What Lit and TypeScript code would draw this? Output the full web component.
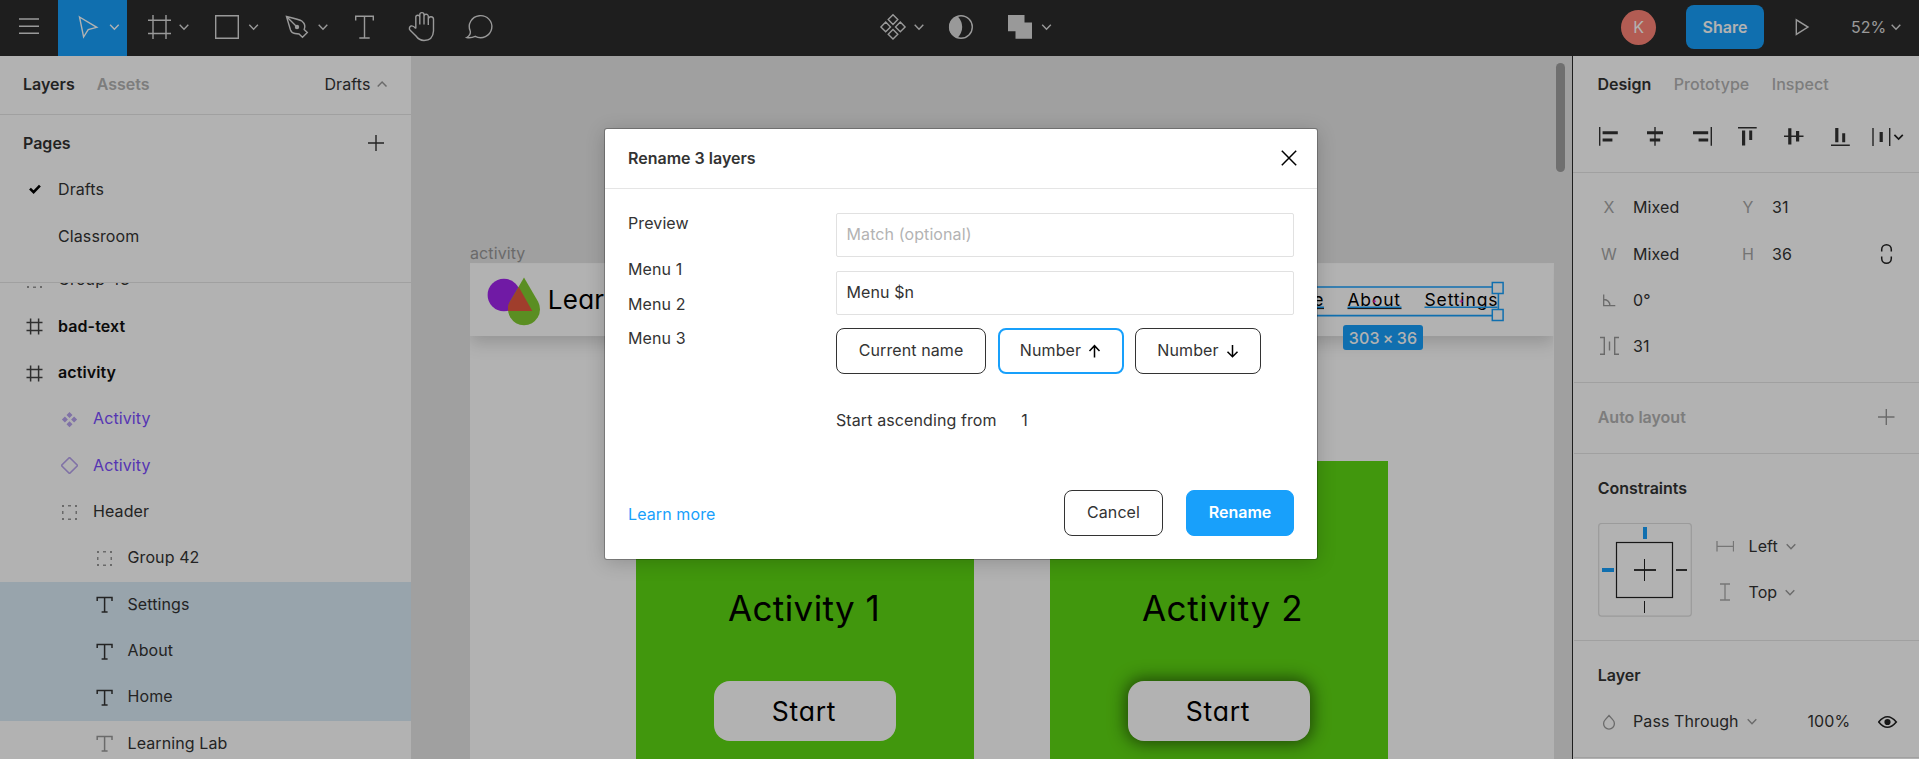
import { LitElement, html, css, svg, nothing, TemplateResult } from "lit";
import { customElement } from "lit/decorators.js";
import { classMap } from "lit/directives/class-map.js";

// Crops a region out of the window-sized drawing grid used by every glyph.
const glyph = (x: number, y: number, w: number, h: number, body: unknown) =>
  html`<svg class="glyph" width=${w} height=${h} viewBox="${x} ${y} ${w} ${h}">${body}</svg>`;

const chevron = (x: number, y: number) =>
  svg`<path d="M${x - 4.3} ${y - 2.2}l4.3 4.4l4.3 -4.4" fill="none" stroke="currentColor" stroke-width="1.4"/>`;

const base = css`
  * { box-sizing: border-box; }
  .glyph { display: block; flex: none; }
`;

@customElement("tool-bar")
class ToolBar extends LitElement {
  static styles = [base, css`
    :host { display: flex; height: 56px; background: #2c2c2c; color: #dcdcdc; font-weight: 400; letter-spacing: 0; }
    .group { display: flex; height: 56px; }
    .center { margin-left: 356px; }
    .active { background: #18a0fb; color: #fff; }
    .right { display: flex; align-items: center; height: 54px; margin-left: auto; }
    .avatar { width: 35px; height: 35px; border-radius: 50%; background: #ff8577; color: #fff; display: flex; align-items: center; justify-content: center; margin-right: 30px; }
    .share { width: 78px; height: 44px; border-radius: 8px; background: #18a0fb; color: #fff; font-weight: 600; display: flex; align-items: center; justify-content: center; padding-bottom: 1px; margin-right: 16px; }
    .zoom { margin-left: 26px; width: 34px; padding-bottom: 1px; }
  `];
  render() {
    const s = (d: string) => svg`<path d=${d} fill="none" stroke="currentColor" stroke-width="1.4"/>`;
    return html`
      <div class="group">
        ${glyph(0, 0, 58, 56, s("M19 19h20M19 26.3h20M19 33.3h20"))}
        <div class="active">${glyph(58, 0, 69, 56, svg`${s("M79.5 17l17.3 10.3l-8.6 2.4l-4.6 7.3z")}${chevron(114.4, 27)}`)}</div>
        ${glyph(127, 0, 68, 56, svg`${s("M148 20.3h23M148 33.5h23M153 15v24M166 15v24")}${chevron(184, 27)}`)}
        ${glyph(195, 0, 72, 56, svg`${s("M215.7 15.7h22.6v22.6h-22.6z")}${chevron(253.6, 27)}`)}
        ${glyph(267, 0, 71, 56, svg`${s("M286.5 16.5L290.5 30Q291.5 33 295 33.5L299 34L302.5 37.3L307.3 32.5L304.2 29.5Q306.2 24.5 301.8 21Q300 19.8 286.5 16.5zM286.5 16.5L296 26")}<circle cx="297" cy="27" r="2.2" fill="currentColor"/>${chevron(323, 27)}`)}
        ${glyph(338, 0, 53, 56, s("M355.7 20.5v-4.3h17.6v4.3M364.5 16.2v21.8M359.3 38h10.4"))}
        ${glyph(391, 0, 58, 56, s("M415.8 28.5V17.2a2 2 0 0 1 4 0M419.8 24.5V14.7a2 2 0 0 1 4.2 0V24.5M424 16.4a2.1 2.1 0 0 1 4.3 0V25M428.3 19.2a2.4 2.4 0 0 1 5.2 .2V31Q433 40.3 424 40.5Q419 40.3 416 36L410.2 30.2A2.5 2.5 0 0 1 411 26Q413 25.3 415.8 28.5"))}
        ${glyph(449, 0, 61, 56, s("M466.8 37.5Q471 35 470.3 31.2A11.3 11 0 1 1 475.2 36.3Q471 38.3 466.8 37.5z"))}
      </div>
      <div class="group center">
        ${glyph(866, 0, 74, 56, svg`${s("M893 14.8l4.8 4.8l-4.8 4.8l-4.8 -4.8zM893 29.4l4.8 4.8l-4.8 4.8l-4.8 -4.8zM885.7 22.1l4.8 4.8l-4.8 4.8l-4.8 -4.8zM900.3 22.1l4.8 4.8l-4.8 4.8l-4.8 -4.8z")}${chevron(919, 27)}`)}
        ${glyph(940, 0, 52, 56, svg`<circle cx="961" cy="27" r="11.3" fill="none" stroke="currentColor" stroke-width="1.4"/><path d="M957.6 16a11.3 11.3 0 0 0 0 22q9.2 -11 0 -22z" fill="currentColor"/>`)}
        ${glyph(992, 0, 74, 56, svg`<path d="M1008 15h16.5v7.5h7.5v16.3h-16.5v-7.6h-7.5z" fill="currentColor"/>${chevron(1046.5, 27)}`)}
      </div>
      <div class="right">
        <div class="avatar">K</div>
        <div class="share">Share</div>
        ${glyph(1780, 0, 45, 54, s("M1796.3 19.8v14.6l11.7 -7.3z"))}
        <div class="zoom">52%</div>
        ${glyph(1885, 0, 34, 54, chevron(1896, 27))}
      </div>`;
  }
}

type Layer = { name: string; icon: string; depth: number; bold?: boolean; tone?: string; selected?: boolean };

@customElement("layers-panel")
class LayersPanel extends LitElement {
  static styles = [base, css`
    :host { display: flex; flex-direction: column; width: 412px; background: #fff; border-right: 1px solid #e5e5e5; overflow: hidden; }
    .tabs { display: flex; height: 59px; padding: 0 23px 2px; align-items: center; border-bottom: 1px solid #e5e5e5; font-weight: 600; letter-spacing: 0; flex: none; }
    .tabs .off { color: #b3b3b3; margin-left: 22px; }
    .tabs .file { margin-left: auto; font-weight: 370; letter-spacing: .1px; margin-right: 5.5px; }
    .faint { color: #999; }
    .pages { height: 168px; padding-top: 5px; border-bottom: 1px solid #e5e5e5; flex: none; }
    .row { display: flex; align-items: center; height: 46.33px; }
    .pages .title { padding: 0 26px 0 23px; justify-content: space-between; font-weight: 600; letter-spacing: 0; }
    .page .glyph { margin-left: 23px; margin-right: 11px; }
    .list { flex: 1; overflow: hidden; min-height: 0; }
    .scroll { margin-top: -25.6px; }
    .layer span { padding-bottom: 2.4px; }
    .layer .glyph { margin-right: 15px; color: #999; }
    .d0 { padding-left: 26px; }
    .d1 { padding-left: 61px; }
    .d2 { padding-left: 95.5px; }
    .bold { font-weight: 600; color: #111; }
    .bold .glyph { color: #444; }
    .comp { color: #7b4dff; }
    .comp .glyph { color: #b8a4ee; }
    .sel { background: #daebf7; }
    .sel .glyph { color: #333; }
  `];
  layers: Layer[] = [
    { name: "Group 43", icon: "group", depth: 0 },
    { name: "bad-text", icon: "frame", depth: 0, bold: true },
    { name: "activity", icon: "frame", depth: 0, bold: true },
    { name: "Activity", icon: "component", depth: 1, tone: "comp" },
    { name: "Activity", icon: "instance", depth: 1, tone: "comp" },
    { name: "Header", icon: "group", depth: 1 },
    { name: "Group 42", icon: "group", depth: 2 },
    { name: "Settings", icon: "text", depth: 2, selected: true },
    { name: "About", icon: "text", depth: 2, selected: true },
    { name: "Home", icon: "text", depth: 2, selected: true },
    { name: "Learning Lab", icon: "text", depth: 2 },
  ];
  icons: Record<string, unknown> = {
    group: svg`<path d="M1 1h2v2h-2zM7 1h3v1.5h-3zM14 1h2v2h-2zM1 7h1.5v3h-1.5zM14.5 7h1.5v3h-1.5zM1 14h2v2h-2zM7 14.5h3v1.5h-3zM14 14h2v2h-2z" fill="currentColor"/>`,
    frame: svg`<path d="M.5 4.5h16M.5 12.5h16M4.6 .5v16M12.6 .5v16" fill="none" stroke="currentColor" stroke-width="1.5"/>`,
    component: svg`<path d="M8.5 1l3 3l-3 3l-3 -3zM8.5 10.2l3 3l-3 3l-3 -3zM3.9 5.6l3 3l-3 3l-3 -3zM13.1 5.6l3 3l-3 3l-3 -3z" fill="currentColor"/>`,
    instance: svg`<path d="M8.5 .4l8.1 8.1l-8.1 8.1l-8.1 -8.1z" fill="none" stroke="currentColor" stroke-width="1.5"/>`,
    text: svg`<path d="M1.2 5v-3.4h14.8v3.4M8.6 1.6v14.4M5.6 16h6" fill="none" stroke="currentColor" stroke-width="1.5"/>`,
  };
  render() {
    return html`
      <div class="tabs"><span>Layers</span><span class="off">Assets</span><span class="file">Drafts</span>
        <span class="faint">${glyph(376, 76, 12, 16, svg`<path d="M377.7 86.6l4.4 -4.5l4.4 4.5" fill="none" stroke="currentColor" stroke-width="1.5"/>`)}</span></div>
      <div class="pages">
        <div class="row title"><span>Pages</span>${glyph(367, 135, 18, 18, svg`<path d="M368 144h16M376 136v16" stroke="#333" stroke-width="1.4"/>`)}</div>
        <div class="row page">${glyph(23, 180, 24, 20, svg`<path d="M30 189.6l3.6 3.6l6.3 -6.6" fill="none" stroke="#000" stroke-width="2.6"/>`)}<span>Drafts</span></div>
        <div class="row page">${glyph(23, 226, 24, 20, nothing)}<span>Classroom</span></div>
      </div>
      <div class="list"><div class="scroll">
        ${this.layers.map((l) => html`<div class=${classMap({ row: true, layer: true, ["d" + l.depth]: true, bold: !!l.bold, comp: l.tone === "comp", sel: !!l.selected })}>
          ${glyph(0, 0, 17, 17, this.icons[l.icon])}<span>${l.name}</span></div>`)}
      </div></div>`;
  }
}

@customElement("design-panel")
class DesignPanel extends LitElement {
  static styles = [base, css`
    :host { display: flex; flex-direction: column; width: 347px; background: #fff; border-left: 1px solid #2c2c2c; overflow: hidden; }
    .tabs { display: flex; align-items: center; height: 57px; padding: 0 0 1px 24.5px; gap: 22.5px; font-weight: 600; letter-spacing: 0; flex: none; }
    .off { color: #b3b3b3; font-weight: 500; letter-spacing: .05px; }
    .align { height: 60px; border-bottom: 1px solid #e5e5e5; flex: none; }
    .section { padding: 11.2px 0; border-bottom: 1px solid #e5e5e5; margin-left: 1px; flex: none; }
    .row { display: flex; align-items: center; height: 46.33px; }
    .title { font-weight: 600; letter-spacing: 0; padding-left: 23.7px; }
    .spread { justify-content: space-between; padding-right: 24px; }
    .muted { color: #b3b3b3; }
    .lab { width: 35px; margin-left: 24px; display: flex; justify-content: center; padding-right: 13px; color: #a6a6a6; flex: none; }
    .val { width: 80px; flex: none; }
    .props { height: 210px; }
    .auto { height: 71px; }
    .cons { height: 187px; }
    .layer { height: 117px; }
    .body { display: flex; padding: 11px 0 0 24px; }
    .menus { margin-left: 24px; }
    .menus .row { gap: 14.5px; }
    .g9 { color: #999; }
    .drop { display: flex; align-items: center; gap: 5px; }
    .pass { width: 174.5px; }
    .pct { width: 70px; }
    .pass, .pct { padding-bottom: 1px; }
  `];
  render() {
    const caret = html`<span class="g9">${glyph(0, 0, 16, 16, chevron(8, 8.5))}</span>`;
    const box = (d: string) => svg`<path d=${d} fill="#333"/>`;
    return html`
      <div class="tabs"><span>Design</span><span class="off">Prototype</span><span class="off">Inspect</span></div>
      <div class="align">${glyph(1573, 113, 346, 59, svg`
        ${box("M1599 127h1.4v18.7h-1.4zM1602.6 131.3h15.2v3h-15.2zM1602.6 138.6h9.8v3h-9.8z")}
        ${box("M1654.3 127h1.4v18.7h-1.4zM1647 131.3h16v3h-16zM1649.8 138.6h10.4v3h-10.4z")}
        ${box("M1710.6 127h1.4v18.7h-1.4zM1693 131.3h15.2v3h-15.2zM1698.6 138.6h9.6v3h-9.6z")}
        ${box("M1738 127h18.7v1.4h-18.7zM1742 130.6h3.2v15h-3.2zM1749.2 130.6h3v9.4h-3z")}
        ${box("M1784 135.6h19.5v1.4h-19.5zM1788.2 128.2h3.2v16.4h-3.2zM1796 131h3.2v10.6h-3.2z")}
        ${box("M1831 144.6h18.8v1.4h-18.8zM1835.2 128h3.2v14.2h-3.2zM1842.2 133.2h3v9h-3z")}
        ${box("M1872.3 128h1.4v18h-1.4zM1879.6 132h3.2v10h-3.2zM1889 128h1.4v18h-1.4z")}
        <path d="M1894.4 134.8l4.2 4.2l4.2 -4.2" fill="none" stroke="#222" stroke-width="1.7"/>`)}</div>
      <div class="section props">
        <div class="row"><span class="lab">X</span><span class="val">Mixed</span><span class="lab">Y</span><span class="val">31</span></div>
        <div class="row"><span class="lab">W</span><span class="val">Mixed</span><span class="lab">H</span><span class="val">36</span>
          ${glyph(1852, 242, 42, 24, svg`<path d="M1881.7 251.5v-2a4.8 4.8 0 0 1 9.6 0v2M1881.7 256.5v2a4.8 4.8 0 0 0 9.6 0v-2" fill="none" stroke="#222" stroke-width="1.5"/>`)}</div>
        <div class="row"><span class="lab">${glyph(1599, 290, 20, 20, svg`<path d="M1603.7 294.5v11.2h11.6M1603.7 299.5q6 .5 6.2 6" fill="none" stroke="#999" stroke-width="1.3"/>`)}</span><span class="val">0°</span></div>
        <div class="row"><span class="lab">${glyph(1599, 337, 20, 20, svg`<path d="M1600 338.5h4.3v16.8h-4.3M1619 338.5h-4.3v16.8h4.3M1609.5 342.5v9" fill="none" stroke="#999" stroke-width="1.4"/>`)}</span><span class="val">31</span></div>
      </div>
      <div class="section auto"><div class="row title spread muted"><span>Auto layout</span>
        ${glyph(1877, 408, 18, 18, svg`<path d="M1878 417h16.5M1886.3 409v16" stroke="#999" stroke-width="1.4"/>`)}</div></div>
      <div class="section cons">
        <div class="row title">Constraints</div>
        <div class="body">
          ${glyph(1598, 523, 94, 94, svg`
            <rect x="1598.7" y="523.5" width="92.6" height="92.7" rx="3" fill="none" stroke="#dedede" stroke-width="1.2"/>
            <rect x="1616.5" y="542.5" width="56" height="55" fill="none" stroke="#222" stroke-width="1.2"/>
            <path d="M1634 570h22" stroke="#222" stroke-width="1.8"/><path d="M1644.5 559v22" stroke="#222"/>
            <path d="M1676 570h11" stroke="#222" stroke-width="1.8"/><path d="M1644.5 601v12" stroke="#222"/>
            <path d="M1643 527h4v12h-4zM1602 568h12v4h-12z" fill="#18a0fb"/>`)}
          <div class="menus">
            <div class="row">${glyph(1716, 538, 18, 18, svg`<path d="M1717 542v10.5M1733.5 542v10.5M1717 547.3h16.5" fill="none" stroke="#aaa" stroke-width="1.3"/>`)}<span class="drop">Left ${caret}</span></div>
            <div class="row">${glyph(1716, 584, 18, 18, svg`<path d="M1720 585h10M1720 601h10M1725 585v16" fill="none" stroke="#aaa" stroke-width="1.3"/>`)}<span class="drop">Top ${caret}</span></div>
          </div>
        </div>
      </div>
      <div class="section layer">
        <div class="row title">Layer</div>
        <div class="row"><span class="lab">${glyph(1600, 713, 18, 18, svg`<path d="M1609 715.5l3.9 4.4a5.4 5.4 0 1 1 -7.8 0z" fill="none" stroke="#999" stroke-width="1.3"/>`)}</span>
          <span class="drop pass">Pass Through ${caret}</span><span class="pct">100%</span>
          ${glyph(1878, 712, 20, 18, svg`<path d="M1878.7 721q8.6 -10.5 17.6 0q-9 10.5 -17.6 0z" fill="none" stroke="#222" stroke-width="1.6"/><circle cx="1887.5" cy="721" r="3.1" fill="#222"/>`)}</div>
      </div>`;
  }
}

@customElement("design-canvas")
class DesignCanvas extends LitElement {
  static styles = [base, css`
    :host { display: block; position: relative; flex: 1; background: #e5e5e5; overflow: hidden; }
    .label { position: absolute; left: 58px; top: 187px; color: #999; line-height: 20px; }
    .board { position: absolute; left: 58px; top: 207.4px; width: 1083.5px; height: 520px; background: #fff; color: #000; font-weight: 400; font-feature-settings: "cv11", "ss01"; }
    .head { position: absolute; inset: 0 0 auto 0; height: 72.5px; background: #fff; box-shadow: 0 7px 16px rgba(0,0,0,.17); clip-path: inset(0 0 -40px 0); }
    .logo { position: absolute; left: 16px; top: 12px; }
    .brand { position: absolute; left: 77.7px; top: 20.5px; font-size: 26px; line-height: 32px; white-space: nowrap; letter-spacing: .3px; }
    .nav { position: absolute; top: 26px; font-size: 17.5px; line-height: 22px; white-space: nowrap; }
    .home { right: 230px; }
    .about { left: 877.5px; letter-spacing: .8px; }
    .settings { left: 954.5px; letter-spacing: .85px; }
    .card { position: absolute; top: 197.2px; width: 338.6px; height: 340px; background: #5ed813; display: flex; flex-direction: column; align-items: center; }
    .one { left: 165.7px; }
    .two { left: 579.7px; }
    .name { margin-top: 125px; font-size: 35px; line-height: 44px; letter-spacing: .4px; padding-right: 2px; }
    .two .name { padding: 0 0 0 7px; letter-spacing: .6px; }
    .start { margin-top: 51px; width: 181.5px; height: 60.5px; border-radius: 16px; background: #fff; display: flex; align-items: center; justify-content: center; font-size: 26.5px; letter-spacing: .8px; padding: 1px 2px 0 0; }
    .two .start { box-shadow: 0 0 16px 3px rgba(0,0,0,.5); }
    .marks { position: absolute; left: 888px; top: 222px; }
    .size { position: absolute; left: 931px; top: 269px; width: 80px; height: 25px; border-radius: 3px; background: #18a0fb; color: #fff; font-weight: 500; letter-spacing: .2px; word-spacing: -1.4px; display: flex; align-items: center; justify-content: center; }
    .thumb { position: absolute; right: 7px; top: 7px; width: 9px; height: 109px; border-radius: 5px; background: #a0a0a0; }
  `];
  render() {
    return html`
      <div class="label">activity</div>
      <div class="board">
        <div class="card one"><div class="name">Activity 1</div><div class="start">Start</div></div>
        <div class="card two"><div class="name">Activity 2</div><div class="start">Start</div></div>
        <div class="head">
          <div class="logo">${glyph(486, 275.5, 60, 52, svg`
            <circle cx="503.9" cy="295.5" r="16.3" fill="#a126ec"/>
            <path d="M524 278L538 302A16 16 0 1 1 510 302z" fill="#81cc31"/>
            <path d="M518.8 287.5L532.3 311.6H508V308q0 -3.5 2 -6z" fill="#e55940"/>`)}</div>
          <div class="brand">Learning Lab</div>
          <div class="nav home">Home</div><div class="nav about">About</div><div class="nav settings">Settings</div>
        </div>
      </div>
      <div class="marks">${glyph(1300, 278, 210, 45, svg`
        <path d="M1300 308.6h24M1347.5 308.6h54" stroke="#111" stroke-width="1"/>
        <path d="M1300 307.2h24M1347.5 307.2h54M1424.5 307.2h73" stroke="#18a0fb" stroke-width="1.5"/>
        <path d="M1300 287h198.4v28.6h-198.4" fill="none" stroke="#18a0fb" stroke-width="1.6"/>
        <path d="M1492.3 282.6h10.8v10.8h-10.8zM1492.3 309.6h10.8v10.8h-10.8z" fill="#fff" stroke="#18a0fb" stroke-width="1.5"/>
        <path d="M1372.5 301.2h3.6M1374.3 299.4v3.6M1459.5 301.2h3.6M1461.3 299.4v3.6" stroke="#f024c0" stroke-width="1"/>`)}</div>
      <div class="size">303 × 36</div>
      <div class="thumb"></div>`;
  }
}

@customElement("rename-dialog")
class RenameDialog extends LitElement {
  static styles = [base, css`
    :host { display: flex; flex-direction: column; width: 712px; height: 430px; background: #fff; border-radius: 2px; box-shadow: 0 3px 20px rgba(0,0,0,.2), 0 0 0 1px rgba(0,0,0,.25); }
    .head { display: flex; align-items: center; justify-content: space-between; height: 60px; padding: 0 19.5px 1px 23px; border-bottom: 1px solid #e5e5e5; font-weight: 600; letter-spacing: 0; }
    .body { display: flex; height: 281px; padding: 24px 23px 0; }
    .preview { width: 208px; }
    .line { height: 34.7px; display: flex; align-items: center; }
    .cap { margin-top: -7px; margin-bottom: 10.8px; }
    .form { width: 458px; }
    .field { height: 44px; border: 1px solid #e1e1e1; border-radius: 2px; display: flex; align-items: center; padding: 0 9.5px 2px; margin-bottom: 14px; }
    .field + .field { margin-bottom: 13px; }
    .hint { color: #b3b3b3; }
    .options { display: flex; gap: 11.5px; }
    .btn { height: 46px; border: 1.4px solid #333; border-radius: 8px; display: flex; align-items: center; justify-content: center; gap: 6px; padding-bottom: 2px; }
    .cur { width: 150px; }
    .num { width: 126px; }
    .on { border: 2px solid #18a0fb; }
    .from { display: flex; margin-top: 34.5px; line-height: 22px; gap: 24.5px; }
    .foot { display: flex; align-items: center; padding: 20px 23px 0; }
    .link { color: #18a0fb; margin: 1px auto 0 0; }
    .cancel { width: 99px; }
    .go { width: 108px; margin-left: 23px; border-color: #18a0fb; background: #18a0fb; color: #fff; font-weight: 600; letter-spacing: 0; }
  `];
  render() {
    const arrow = (d: string) => glyph(0, 0, 14, 16, svg`<path d=${d} fill="none" stroke="#000" stroke-width="1.5"/>`);
    const names: TemplateResult[] = [1, 2, 3].map((n) => html`<div class="line">Menu ${n}</div>`);
    return html`
      <div class="head"><span>Rename 3 layers</span>${glyph(0, 0, 18, 18, svg`<path d="M1.8 1.8l14.4 14.4M16.2 1.8l-14.4 14.4" stroke="#000" stroke-width="1.5"/>`)}</div>
      <div class="body">
        <div class="preview"><div class="line cap">Preview</div>${names}</div>
        <div class="form">
          <div class="field hint">Match (optional)</div>
          <div class="field">Menu $n</div>
          <div class="options">
            <div class="btn cur">Current name</div>
            <div class="btn num on">Number ${arrow("M7.5 15.5v-12M2.5 9l5 -5.3l5 5.3")}</div>
            <div class="btn num">Number ${arrow("M7.5 3v12M2.5 9.7l5 5.1l5 -5.1")}</div>
          </div>
          <div class="from"><span>Start ascending from</span><span>1</span></div>
        </div>
      </div>
      <div class="foot"><span class="link">Learn more</span><div class="btn cancel">Cancel</div><div class="btn go">Rename</div></div>`;
  }
}

@customElement("app-root")
class AppRoot extends LitElement {
  static styles = [base, css`
    :host { display: block; position: relative; width: 1919px; height: 759px; overflow: hidden; font: 370 16px/20px Inter, "Liberation Sans", sans-serif; letter-spacing: .1px; color: #333; background: #e5e5e5; }
    .page { display: flex; flex-direction: column; height: 759px; }
    .main { display: flex; flex: 1; min-height: 0; }
    .scrim { position: absolute; inset: 0; background: rgba(0,0,0,.3); }
    .modal { position: absolute; left: 605px; top: 129px; }
  `];
  render() {
    return html`
      <div class="page">
        <tool-bar></tool-bar>
        <div class="main"><layers-panel></layers-panel><design-canvas></design-canvas><design-panel></design-panel></div>
      </div>
      <div class="scrim"></div>
      <rename-dialog class="modal"></rename-dialog>`;
  }
}
